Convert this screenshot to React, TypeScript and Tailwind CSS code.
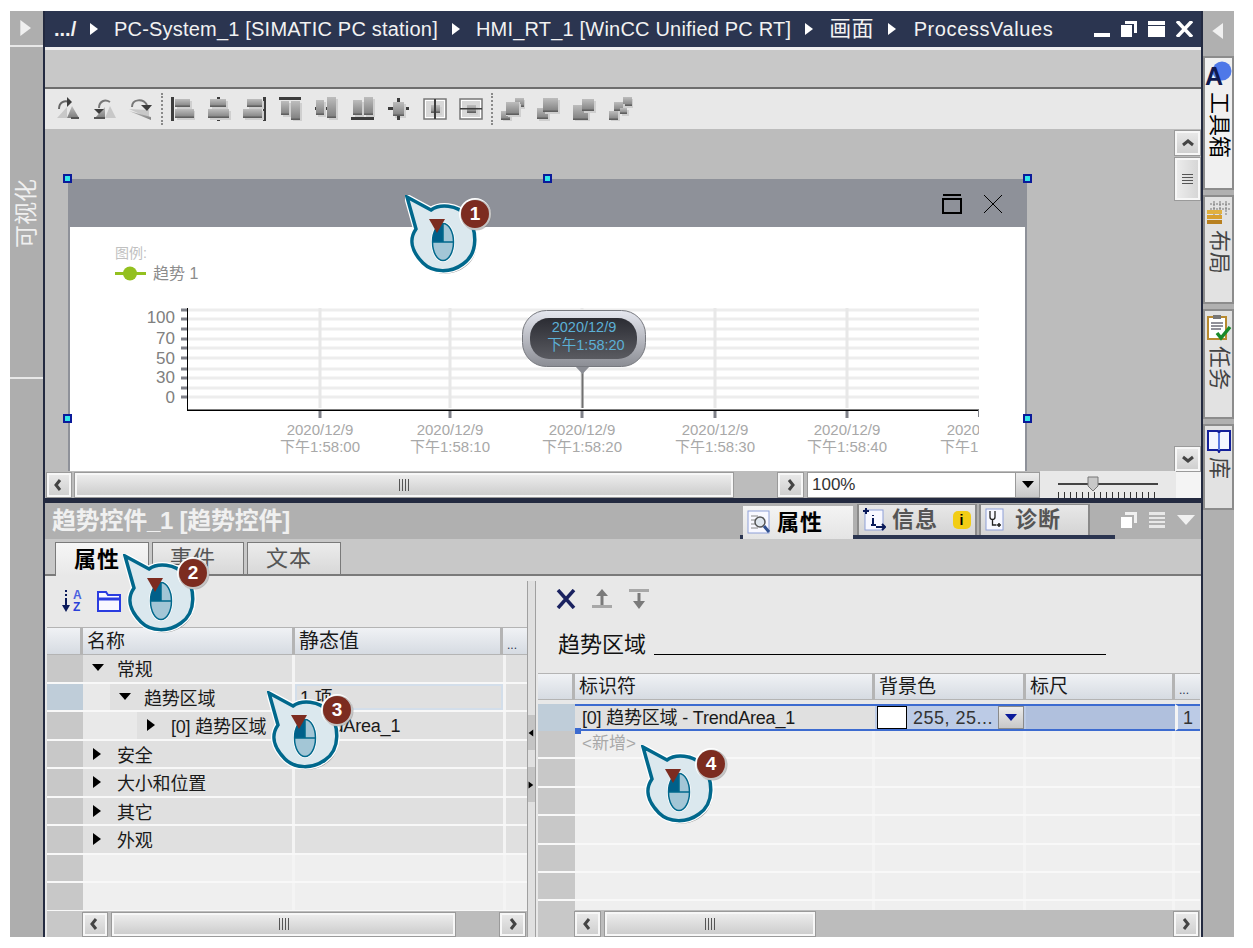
import type { ReactNode } from "react";

const font = "font-['Liberation_Sans','Noto_Sans_CJK_SC',sans-serif]";

// ---------- small bits ----------

function Chevron({ dir }: { dir: "l" | "r" | "u" | "d" }) {
  const pts = {
    l: "9,3 5,8 9,13",
    r: "6,3 10,8 6,13",
    u: "3,10 8,6 13,10",
    d: "3,6 8,10 13,6",
  }[dir];
  return (
    <svg width="16" height="16" viewBox="0 0 16 16">
      <polyline points={pts} fill="none" stroke="#444" strokeWidth="3" />
    </svg>
  );
}

function ScrollBtn({ dir, className = "" }: { dir: "l" | "r" | "u" | "d"; className?: string }) {
  return (
    <div className={`flex shrink-0 items-center justify-center border-2 border-[#f7f7f7] bg-gradient-to-b from-[#e8e8e8] to-[#d0d0d0] outline outline-1 outline-[#9a9a9a] ${className}`}>
      <Chevron dir={dir} />
    </div>
  );
}

function Thumb({ className = "" }: { className?: string }) {
  return (
    <div className={`flex shrink-0 items-center justify-center gap-[2px] border-2 border-[#f7f7f7] bg-gradient-to-b from-[#ececec] to-[#cdcdcd] outline outline-1 outline-[#9a9a9a] ${className}`}>
      <span className="h-3 w-px bg-[#555]" />
      <span className="h-3 w-px bg-[#555]" />
      <span className="h-3 w-px bg-[#555]" />
      <span className="h-3 w-px bg-[#555]" />
    </div>
  );
}

function Tri({ dir, className = "" }: { dir: "r" | "d" | "l"; className?: string }) {
  const pts = { r: "1,0 9,6 1,12", d: "0,2 12,2 6,9", l: "9,0 1,6 9,12" }[dir];
  return (
    <svg width="12" height="12" viewBox="0 0 12 12" className={className} fill="currentColor">
      <polygon points={pts} />
    </svg>
  );
}

function Handle({ className }: { className: string }) {
  return <div className={`absolute size-[9px] border-2 border-[#0a1a9a] bg-[#33e4ea] ${className}`} />;
}

// callout with the mouse pictogram; the tip sits at (left+2, top+2)
function Callout({ n, className }: { n: number; className: string }) {
  const bubble = "M2 2 L26 15 C34 9 52 9 62 21 C72 34 74 58 58 69 C46 78 28 78 18 68 C6 56 4 44 11 34 Z";
  return (
    <div className={`absolute size-[90px] ${className}`}>
      <svg width="90" height="90" viewBox="0 0 90 90" className="absolute left-0 top-0">
        <path d={bubble} fill="#9b9b9b" transform="translate(2 3)" />
        <path d={bubble} fill="#dbe8ee" stroke="#fff" strokeWidth="6" />
        <path d={bubble} fill="#dbe8ee" stroke="#00688c" strokeWidth="3.5" />
        <ellipse cx="38" cy="47" rx="12" ry="20" fill="#fff" />
        <ellipse cx="38" cy="47" rx="10.5" ry="18.5" fill="#a3c6d6" stroke="#00688c" strokeWidth="1.5" />
        <path d="M38 28.5 A10.5 18.5 0 0 0 27.5 47 H38 Z" fill="#00608a" />
        <path d="M38 28 V47 M27 47 H49" stroke="#00688c" strokeWidth="1.5" />
        <polygon points="24,24 40,24 32,38" fill="#7c2c20" />
        <circle cx="70" cy="19" r="16" fill="#fff" />
        <circle cx="71" cy="20" r="15.5" fill="#8a8a8a" opacity="0.5" />
        <circle cx="70" cy="19" r="14" fill="#7c2c20" />
      </svg>
      <span className={`absolute left-[55px] top-[5px] flex h-7 w-[30px] items-center justify-center text-[19px] font-bold text-white ${font}`}>{n}</span>
    </div>
  );
}

// ---------- toolbar icons ----------

function B({ x, y, w, h }: { x: number; y: number; w: number; h: number }) {
  return (
    <>
      <rect x={x + 2} y={y + 2} width={w} height={h} fill="#cfcfcf" />
      <rect x={x} y={y} width={w} height={h} fill="url(#tbg)" />
      <rect x={x} y={y + h - 1.5} width={w} height={1.5} fill="#5f5f5f" />
    </>
  );
}

function Ico({ children }: { children: ReactNode }) {
  return (
    <svg width="24" height="24" viewBox="0 0 24 24" className="shrink-0">
      {children}
    </svg>
  );
}

const D = "#3d3d3d";

const iconsA = [
  <Ico key="a">
    <polygon points="0,21 10,10 10,21" fill="#c8c8c8" />
    <polygon points="10,21 15,9 22,21" fill="url(#tbg)" />
    <rect x="14" y="20" width="8" height="2" fill="#555" />
    <path d="M2 12 C2 5 8 3 12 5" fill="none" stroke="#666" strokeWidth="2" />
    <polygon points="10,0 15,5 10,10" fill={D} />
  </Ico>,
  <Ico key="b">
    <polygon points="12,21 17,9 23,21" fill="#c8c8c8" />
    <polygon points="2,21 12,21 12,10" fill="url(#tbg)" />
    <path d="M6 11 C6 4 12 2 17 5" fill="none" stroke="#777" strokeWidth="2" />
    <polygon points="1,12 11,12 6,17" fill={D} />
    <rect x="1" y="20" width="11" height="2" fill="#555" />
  </Ico>,
  <Ico key="c">
    <polygon points="0,12 20,21 20,13" fill="#c8c8c8" />
    <polygon points="0,14 22,23 22,20" fill="url(#tbg)" />
    <path d="M3 10 C3 2 14 1 18 8" fill="none" stroke="#777" strokeWidth="2" />
    <polygon points="12,8 23,8 18,14" fill={D} />
  </Ico>,
];

const iconsB = [
  <Ico key="1">
    <rect x="0" y="0" width="3" height="24" fill={D} />
    <B x={4} y={2} w={15} h={8} />
    <B x={4} y={12} w={19} h={9} />
  </Ico>,
  <Ico key="2">
    <rect x="10" y="0" width="3" height="24" fill={D} />
    <B x={3} y={2} w={16} h={8} />
    <B x={1} y={12} w={21} h={9} />
  </Ico>,
  <Ico key="3">
    <rect x="20" y="0" width="3" height="24" fill={D} />
    <B x={4} y={2} w={15} h={8} />
    <B x={0} y={12} w={19} h={9} />
  </Ico>,
  <Ico key="4">
    <rect x="0" y="0" width="22" height="3" fill={D} />
    <B x={2} y={4} w={8} h={14} />
    <B x={12} y={4} w={9} h={19} />
  </Ico>,
  <Ico key="5">
    <rect x="0" y="10" width="22" height="3" fill={D} />
    <B x={1} y={3} w={8} h={15} />
    <B x={12} y={0} w={9} h={21} />
  </Ico>,
  <Ico key="6">
    <B x={2} y={3} w={9} h={15} />
    <B x={13} y={0} w={9} h={18} />
    <rect x="0" y="20" width="23" height="3" fill={D} />
  </Ico>,
  <Ico key="7">
    <rect x="10" y="1" width="3" height="22" fill={D} />
    <rect x="1" y="10" width="21" height="3" fill={D} />
    <B x={6} y={5} w={11} h={14} />
    <rect x="10" y="1" width="3" height="4" fill={D} />
    <rect x="10" y="19" width="3" height="4" fill={D} />
  </Ico>,
  <Ico key="8">
    <rect x="1" y="2" width="22" height="20" fill="#fff" stroke="#777" strokeWidth="1.5" />
    <rect x="3" y="4" width="18" height="16" fill="#d8d8d8" />
    <B x={8} y={8} w={9} h={8} />
    <rect x="11" y="2" width="2" height="20" fill={D} />
  </Ico>,
  <Ico key="9">
    <rect x="1" y="2" width="22" height="20" fill="#fff" stroke="#777" strokeWidth="1.5" />
    <rect x="3" y="4" width="18" height="16" fill="#d8d8d8" />
    <B x={8} y={8} w={9} h={8} />
    <rect x="1" y="11" width="22" height="1.5" fill={D} />
  </Ico>,
];

const iconsC = [
  <Ico key="x">
    <B x={14} y={1} w={9} h={9} />
    <B x={0} y={14} w={9} h={9} />
    <rect x="5" y="5" width="14" height="14" fill="#eee" opacity="0.7" />
    <B x={5} y={5} w={13} h={13} />
  </Ico>,
  <Ico key="y">
    <B x={0} y={11} w={11} h={11} />
    <B x={6} y={1} w={15} h={14} />
  </Ico>,
  <Ico key="z">
    <B x={0} y={8} w={15} h={15} />
    <B x={9} y={2} w={12} h={12} />
  </Ico>,
  <Ico key="w">
    <B x={14} y={0} w={9} h={9} />
    <B x={5} y={5} w={9} h={9} />
    <B x={11} y={11} w={7} h={6} />
    <B x={0} y={14} w={9} h={9} />
  </Ico>,
];

function Dots() {
  return <div className="mx-[8px] h-[32px] w-[2px] shrink-0 border-l-2 border-dotted border-[#8a8a8a]" />;
}

// ---------- chart ----------

const gridY = [310, 319, 329, 339, 348, 358, 369, 378, 388, 397];
const gridX = [320, 450, 582, 715, 847];
const yLabels: [string, number][] = [["100", 323], ["70", 344], ["50", 364], ["30", 383], ["0", 403]];
const xLabels: [number, string][] = [[320, "下午1:58:00"], [450, "下午1:58:10"], [582, "下午1:58:20"], [715, "下午1:58:30"], [847, "下午1:58:40"]];

function Chart() {
  const ff = "'Liberation Sans','Noto Sans CJK SC',sans-serif";
  return (
    <svg width="955" height="244" viewBox="70 227 955 244" fontFamily={ff}>
      <defs>
        <linearGradient id="pillOut" x1="0" x2="0" y1="0" y2="1">
          <stop offset="0" stopColor="#e6e8f0" />
          <stop offset="1" stopColor="#8b8d94" />
        </linearGradient>
        <linearGradient id="pillIn" x1="0" x2="0" y1="0" y2="1">
          <stop offset="0" stopColor="#2b2c33" />
          <stop offset="1" stopColor="#5a5b61" />
        </linearGradient>
      </defs>
      <text x="115" y="258" fontSize="14" fill="#c0c0c0">图例:</text>
      <rect x="115" y="272" width="31" height="3" fill="#93c01f" />
      <circle cx="130" cy="273.5" r="7" fill="#93c01f" />
      <text x="153" y="279" fontSize="16" fill="#8c8c8c">趋势 1</text>

      {gridY.map((y) => (
        <g key={y}>
          <rect x="188" y={y - 1.5} width="791" height="3" fill="#ededed" />
          <rect x="181" y={y - 1.5} width="6" height="3" fill="#80828a" />
        </g>
      ))}
      {gridX.map((x) => (
        <g key={x}>
          <rect x={x - 1.5} y="308" width="3" height="100" fill="#e8e8e8" />
          <rect x={x - 1.5} y="411" width="3" height="7" fill="#80828a" />
        </g>
      ))}
      <rect x="187" y="308" width="1" height="102" fill="#000" />
      <rect x="187" y="409.5" width="792" height="1.5" fill="#000" />
      <rect x="978" y="410" width="1" height="7" fill="#80828a" />
      {yLabels.map(([t, y]) => (
        <text key={t} x="175" y={y} fontSize="17" fill="#808080" textAnchor="end">{t}</text>
      ))}
      {xLabels.map(([x, t]) => (
        <g key={x}>
          <text x={x} y="435" fontSize="15" fill="#a8a8a8" textAnchor="middle">2020/12/9</text>
          <text x={x} y="452" fontSize="15" fill="#a8a8a8" textAnchor="middle">{t}</text>
        </g>
      ))}
      <svg x="930" y="420" width="49" height="40" viewBox="930 420 49 40">
        <text x="980" y="435" fontSize="15" fill="#a8a8a8" textAnchor="middle">2020/12/9</text>
        <text x="980" y="452" fontSize="15" fill="#a8a8a8" textAnchor="middle">下午1:58:50</text>
      </svg>

      <rect x="581.5" y="366" width="2" height="42" fill="#707070" />
      <polygon points="575,366 590,366 582.5,374" fill="#8b8d94" />
      <rect x="522.5" y="310.5" width="123" height="56" rx="24" fill="url(#pillOut)" stroke="#77797f" />
      <rect x="530" y="318" width="107" height="41" rx="19" fill="url(#pillIn)" />
      <text x="584" y="332" fontSize="14.5" fill="#5cb0d6" textAnchor="middle">2020/12/9</text>
      <text x="586" y="350" fontSize="14.5" fill="#5cb0d6" textAnchor="middle">下午1:58:20</text>
    </svg>
  );
}

// ---------- tables ----------

type Row = { depth: number; arrow?: "r" | "d"; label?: string; value?: string; sel?: boolean; boxed?: boolean };

const leftRows: Row[] = [
  { depth: 0, arrow: "d", label: "常规" },
  { depth: 1, arrow: "d", label: "趋势区域", value: "1 项", sel: true, boxed: true },
  { depth: 2, arrow: "r", label: "[0] 趋势区域", value: "TrendArea_1" },
  { depth: 0, arrow: "r", label: "安全" },
  { depth: 0, arrow: "r", label: "大小和位置" },
  { depth: 0, arrow: "r", label: "其它" },
  { depth: 0, arrow: "r", label: "外观" },
  { depth: 0 },
  { depth: 0 },
];

function LeftRow({ r }: { r: Row }) {
  const bg = r.label ? "bg-[#e0e0e0]" : "bg-[#efefef]";
  return (
    <div className="grid h-[28.5px] grid-cols-[36px_212px_208px_24px] border-b-2 border-[#f8f8f8] text-[18px] leading-none tracking-[-0.2px] text-[#1a1a1a]">
      <div className={r.sel ? "bg-[#bfcdd9]" : "bg-[#c8c8c8]"} />
      <div className={`flex border-r-[3px] border-[#f4f4f4] ${bg}`}>
        {r.depth > 0 && <div className={r.depth === 1 ? "w-[27px] bg-[#e9e9e9]" : "w-[54px] bg-[#e9e9e9]"} />}
        {r.label && (
          <div className="flex items-center">
            <Tri dir={r.arrow ?? "r"} className="ml-[9px] text-black" />
            <span className="ml-[13px] whitespace-nowrap pt-[4px]">{r.label}</span>
          </div>
        )}
      </div>
      <div className={`flex items-center pl-[3px] pt-[2px] ${bg} ${r.boxed ? "border-2 border-[#d3deea]" : ""}`}>{r.value}</div>
      <div className={`border-l-[3px] border-[#f4f4f4] ${bg}`} />
    </div>
  );
}

function RightRow({ add }: { add?: boolean }) {
  return (
    <div className="grid h-[28.4px] grid-cols-[37px_300px_151px_149px_25px] border-b-2 border-[#f8f8f8] bg-[#efefef]">
      <div className="bg-[#c8c8c8]" />
      <div className="flex items-center border-r-[3px] border-[#f4f4f4] pl-[7px] text-[17px] text-[#a8a8a8]">{add ? "<新增>" : ""}</div>
      <div className="border-r-[3px] border-[#f4f4f4]" />
      <div className="border-r-[3px] border-[#f4f4f4]" />
      <div />
    </div>
  );
}

function HeadCell({ children, className = "border-r-[3px] border-[#b4b4b4] text-[19px]" }: { children?: ReactNode; className?: string }) {
  return (
    <div className={`flex items-center bg-gradient-to-b from-[#f0f2f5] to-[#d6dbe2] pl-[4px] leading-none text-[#1a1a1a] ${className}`}>
      {children}
    </div>
  );
}

function RailTab({ icon, label, h, active }: { icon: ReactNode; label: string; h: string; active?: boolean }) {
  return (
    <div className={`flex w-full flex-col items-center border-2 border-[#8c8c8c] pt-[3px] ${h} ${active ? "bg-[#f0f0f0] text-black" : "bg-[#e2e2e2] text-[#444]"}`}>
      {icon}
      <span className="mt-[4px] text-[22px] leading-none [text-orientation:sideways] [writing-mode:vertical-rl]">{label}</span>
    </div>
  );
}

export default function App() {
  return (
    <div className={`relative h-[948px] w-[1253px] overflow-hidden bg-white pl-[10px] pt-[11px] ${font}`}>
      <svg width="0" height="0" className="absolute">
        <defs>
          <linearGradient id="tbg" x1="0" x2="0" y1="0" y2="1">
            <stop offset="0" stopColor="#bdbdbd" />
            <stop offset="1" stopColor="#7d7d7d" />
          </linearGradient>
        </defs>
      </svg>

      <div className="flex h-[926px] w-[1224px]">
        {/* left rail */}
        <div className="flex w-[35px] shrink-0 flex-col border-r-2 border-[#232a40] bg-[#aeaeae] text-[#f0f0f0]">
          <div className="flex h-[36px] items-center justify-center border-b-2 border-[#e8e8e8]">
            <Tri dir="r" className="size-[16px] text-[#f0f0f0]" />
          </div>
          <div className="flex h-[332px] flex-col items-center justify-end border-b-2 border-[#e8e8e8] pb-[129px]">
            <span className="rotate-180 text-[23px] leading-none [text-orientation:sideways] [writing-mode:vertical-rl]">可视化</span>
          </div>
        </div>

        {/* centre */}
        <div className="flex w-[1158px] shrink-0 flex-col border-r-2 border-[#232a40]">
          <div className="flex h-[36px] shrink-0 items-center gap-[13px] bg-[#2b3550] pl-[9px] text-[20px] leading-none tracking-[0.2px] text-[#f2f2f2]">
            <span className="w-[22px] font-bold tracking-normal">.../</span>
            <Tri dir="r" className="text-white" />
            <span className="whitespace-nowrap">PC-System_1 [SIMATIC PC station]</span>
            <Tri dir="r" className="text-white" />
            <span className="whitespace-nowrap">HMI_RT_1 [WinCC Unified PC RT]</span>
            <Tri dir="r" className="text-white" />
            <span className="whitespace-nowrap text-[22px]">画面</span>
            <Tri dir="r" className="text-white" />
            <span className="ml-[2px] whitespace-nowrap tracking-[0.6px]">ProcessValues</span>
            <div className="ml-auto mr-[8px] flex items-end gap-[11px]">
              <div className="h-[4px] w-[16px] bg-white" />
              <svg width="16" height="16" viewBox="0 0 16 16"><path d="M0 4h11v12H0z M4 0h12v12h-3V3H4z" fill="#fff" /></svg>
              <svg width="17" height="16" viewBox="0 0 17 16"><path d="M0 0h17v4H0z M0 5h17v11H0z" fill="#fff" /></svg>
              <svg width="17" height="16" viewBox="0 0 17 16"><path d="M1 0 L16 16 M16 0 L1 16" stroke="#fff" strokeWidth="3.5" /></svg>
            </div>
          </div>
          <div className="h-[3px] shrink-0 bg-[#efefef]" />
          <div className="h-[37px] shrink-0 border-b-0 bg-[#c8c8c8]" />
          <div className="h-[2px] shrink-0 bg-[#6e6e6e]" />

          {/* editor toolbar */}
          <div className="flex h-[40px] shrink-0 items-center bg-[#e8e8e8] pl-[12px]">
            <div className="flex gap-[12px]">{iconsA}</div>
            <Dots />
            <div className="flex gap-[12px]">{iconsB}</div>
            <Dots />
            <div className="flex gap-[12px]">{iconsC}</div>
          </div>

          {/* canvas */}
          <div className="relative flex h-[342px] shrink-0 bg-[#bcbcbc]">
            <div className="flex-1 overflow-hidden pl-[23px] pt-[50px]">
              <div className="flex h-[292px] w-[959px] flex-col bg-[#8e9199] px-[2px]">
                <div className="flex h-[48px] shrink-0 items-center justify-end gap-[21px] pr-[22px] pt-[2px]">
                  <svg width="20" height="20" viewBox="0 0 20 20"><path d="M1 1h18" stroke="#000" strokeWidth="2" /><rect x="1" y="5" width="18" height="14" fill="none" stroke="#000" strokeWidth="2" /></svg>
                  <svg width="20" height="20" viewBox="0 0 20 20"><path d="M1 1 L19 19 M19 1 L1 19" stroke="#000" strokeWidth="1" /></svg>
                </div>
                <div className="flex-1 overflow-hidden bg-white">
                  <Chart />
                </div>
              </div>
            </div>
            <div className="mr-[1px] flex w-[25px] shrink-0 flex-col pt-[2px]">
              <ScrollBtn dir="u" className="h-[24px]" />
              <div className="mt-[3px] flex h-[42px] flex-col items-center justify-center gap-[2px] border-2 border-[#f7f7f7] bg-gradient-to-r from-[#ececec] to-[#d6d6d6] outline outline-1 outline-[#9a9a9a]">
                <span className="h-px w-[11px] bg-[#555]" />
                <span className="h-px w-[11px] bg-[#555]" />
                <span className="h-px w-[11px] bg-[#555]" />
                <span className="h-px w-[11px] bg-[#555]" />
              </div>
              <ScrollBtn dir="d" className="mt-auto h-[24px]" />
            </div>
            <Handle className="left-[18px] top-[45px]" />
            <Handle className="left-[498px] top-[45px]" />
            <Handle className="left-[978px] top-[45px]" />
            <Handle className="left-[18px] top-[285px]" />
            <Handle className="left-[978px] top-[285px]" />
          </div>

          {/* horizontal bar + zoom */}
          <div className="flex h-[27px] shrink-0 items-center bg-[#bcbcbc] pl-[2px]">
            <ScrollBtn dir="l" className="h-[24px] w-[24px]" />
            <Thumb className="ml-[4px] h-[24px] w-[658px]" />
            <ScrollBtn dir="r" className="ml-[45px] h-[24px] w-[25px]" />
            <div className="ml-[4px] flex h-[26px] w-[233px] items-center justify-between border border-[#9a9a9a] bg-white pl-[4px] text-[17px] text-[#333]">
              100%
              <div className="flex h-full w-[24px] items-center justify-center border-l border-[#9a9a9a] bg-gradient-to-b from-[#ececec] to-[#c8c8c8]">
                <Tri dir="d" className="text-black" />
              </div>
            </div>
            <div className="relative h-full w-[136px] shrink-0 bg-[#e8e8e8]">
              <div className="absolute left-[18px] top-[12px] h-[2px] w-[100px] bg-[#444]" />
              <svg width="12" height="16" viewBox="0 0 12 16" className="absolute left-[47px] top-[5px]">
                <polygon points="1,1 11,1 11,10 6,15 1,10" fill="#c8c8c8" stroke="#777" />
              </svg>
              <div className="absolute left-[18px] top-[21px] h-[6px] w-[100px] bg-[repeating-linear-gradient(90deg,#333_0,#333_1px,transparent_1px,transparent_6px)]" />
            </div>
            <div className="h-full w-[25px] shrink-0 bg-[#f4f4f4]" />
          </div>

          <div className="h-[5px] shrink-0 bg-[#232a40]" />

          {/* inspector title row */}
          <div className="flex h-[36px] shrink-0 items-end bg-[#b0b0b0] pl-[7px]">
            <span className="mb-[6px] w-[236px] whitespace-nowrap text-[24px] font-semibold leading-none tracking-[-0.25px] text-[#f0f0f0]">趋势控件_1 [趋势控件]</span>
            <div className="ml-[452px] h-[4px] w-[3px] bg-[#2b3550]" />
            <div className="flex h-[33px] w-[110px] items-center gap-[4px] bg-gradient-to-b from-[#f4f4f4] to-[#e4e4e4] pl-[4px] text-[22px] font-bold leading-none tracking-[1px] text-black">
              <svg width="26" height="26" viewBox="0 0 26 26">
                <rect x="1" y="1" width="21" height="22" fill="#f8f8ff" stroke="#8ea0d8" />
                <path d="M4 6h7M4 10h5M4 14h5M4 18h7" stroke="#888" />
                <circle cx="13" cy="12" r="5" fill="#dfe6ee" stroke="#555" strokeWidth="1.5" />
                <path d="M17 16 L22 22" stroke="#305090" strokeWidth="3" />
              </svg>
              属性
            </div>
            <div className="flex border-b-4 border-[#2b3550]">
              <div className="ml-[4px] flex h-[31px] w-[120px] items-center gap-[6px] border-x-2 border-t border-[#8a8a8a] bg-gradient-to-b from-[#e8e8e8] to-[#d4d4d4] pl-[3px] text-[22px] font-semibold leading-none tracking-[1px] text-[#555]">
                <svg width="24" height="26" viewBox="0 0 24 26">
                  <rect x="3" y="3" width="18" height="20" fill="#f8f8ff" stroke="#8ea0d8" />
                  <path d="M1 4h6M4 1v6" stroke="#0a1a5a" strokeWidth="2" />
                  <path d="M11 8v1M11 11v7M9 18h5" stroke="#0a1a5a" strokeWidth="2" />
                  <path d="M14 20h9M20 17l3 3-3 3" stroke="#0a1a5a" strokeWidth="2" fill="none" />
                </svg>
                信息
                <span className="ml-[9px] flex size-[18px] items-center justify-center rounded-[5px] bg-[#f2cd16] text-[14px] font-bold leading-none text-black">i</span>
              </div>
              <div className="ml-[2px] flex h-[31px] w-[111px] items-center gap-[10px] border-x-2 border-t border-[#8a8a8a] bg-gradient-to-b from-[#e8e8e8] to-[#d4d4d4] pl-[4px] text-[22px] font-semibold leading-none tracking-[1px] text-[#555]">
                <svg width="20" height="26" viewBox="0 0 20 26">
                  <rect x="1" y="2" width="17" height="21" fill="#f8f8ff" stroke="#8ea0d8" />
                  <path d="M5 4v6a2.5 2.5 0 0 0 5 0V4M7.5 12v6h4" fill="none" stroke="#222" strokeWidth="1.3" />
                  <path d="M12 18h4M14 16v4" stroke="#222" strokeWidth="1.5" />
                </svg>
                诊断
              </div>
              <div className="w-[25px]" />
            </div>
            <div className="ml-[6px] mb-[11px] flex items-center gap-[12px]">
              <svg width="16" height="16" viewBox="0 0 16 16"><path d="M0 5h11v11H0z" fill="#fff" /><path d="M4 0h12v11h-3V3H4z" fill="#f0f0f0" /></svg>
              <svg width="16" height="16" viewBox="0 0 16 16" fill="#e8e8e8"><path d="M0 0h16v3H0zM0 5h16v2H0zM0 9h16v2H0zM0 13h16v3H0z" /></svg>
              <svg width="18" height="12" viewBox="0 0 18 12"><polygon points="0,1 18,1 9,11" fill="#f0f0f0" /></svg>
            </div>
          </div>

          {/* inspector tabs */}
          <div className="flex h-[37px] shrink-0 items-end gap-[3px] border-b-2 border-[#7a7a7a] bg-[#c8c8c8] pl-[10px] text-[22px] leading-none">
            <div className="mb-[-2px] flex h-[34px] w-[94px] items-center justify-center border border-b-0 border-[#7a7a7a] bg-gradient-to-b from-[#f6f6f6] to-[#e8e8e8] pr-[10px] font-bold tracking-[1px] text-black">属性</div>
            <div className="flex h-[32px] w-[92px] items-center justify-center border border-b-0 border-[#7a7a7a] bg-gradient-to-b from-[#ececec] to-[#d8d8d8] pr-[10px] tracking-[1px] text-[#555]">事件</div>
            <div className="flex h-[32px] w-[94px] items-center justify-center border border-b-0 border-[#7a7a7a] bg-gradient-to-b from-[#ececec] to-[#d8d8d8] pr-[10px] tracking-[1px] text-[#555]">文本</div>
          </div>

          {/* inspector body */}
          <div className="flex h-[361px] shrink-0 bg-[#e8e8e8]">
            <div className="flex w-[482px] shrink-0 flex-col pl-[2px]">
              <div className="flex h-[51px] shrink-0 items-center gap-[15px] pb-[2px] pl-[15px]">
                <div className="flex items-center gap-[1px]">
                  <svg width="10" height="24" viewBox="0 0 10 24">
                    <path d="M4 1v2M4 5v2M4 9v8" stroke="#0a1a5a" strokeWidth="2" />
                    <polygon points="0,16 8,16 4,23" fill="#0a1a5a" />
                  </svg>
                  <div className="flex flex-col text-[12px] font-bold leading-[12px]">
                    <span className="text-[#4a62e0]">A</span>
                    <span className="text-[#2840d8]">Z</span>
                  </div>
                </div>
                <svg width="24" height="22" viewBox="0 0 24 22">
                  <path d="M1 2h8l2 3h12v16H1z" fill="#f8f8ff" stroke="#2a3ce0" strokeWidth="2" />
                  <path d="M1 9h22" stroke="#2a3ce0" strokeWidth="3" />
                </svg>
              </div>
              <div className="grid h-[28px] shrink-0 grid-cols-[36px_212px_208px_24px] border-y border-[#b4b4b4]">
                <HeadCell />
                <HeadCell>名称</HeadCell>
                <HeadCell className="border-r-[3px] border-[#b4b4b4] pl-[3px] text-[20px]">静态值</HeadCell>
                <HeadCell className="items-end pb-[3px] text-[12px] text-[#2b3550]">...</HeadCell>
              </div>
              <div className="h-[256px] shrink-0 overflow-hidden">
                {leftRows.map((r, i) => (
                  <LeftRow key={i} r={r} />
                ))}
              </div>
              <div className="flex h-[26px] shrink-0 items-center">
                <div className="h-full w-[36px] bg-[#c8c8c8]" />
                <div className="flex h-full flex-1 items-center bg-[#bcbcbc]">
                  <ScrollBtn dir="l" className="h-[23px] w-[24px]" />
                  <Thumb className="ml-[5px] h-[23px] w-[343px]" />
                  <ScrollBtn dir="r" className="ml-auto mr-[2px] h-[23px] w-[25px]" />
                </div>
              </div>
            </div>

            {/* splitter */}
            <div className="flex w-[11px] shrink-0 flex-col pt-[5px]">
              <div className="flex h-[356px] w-[9px] flex-col border-x border-[#a0a0a0] bg-[#e0e0e0] pt-[134px]">
                <div className="flex h-[35px] items-center justify-center bg-[#c4c4c4]"><Tri dir="l" className="size-[8px] text-black" /></div>
                <div className="h-[17px]" />
                <div className="flex h-[35px] items-center justify-center bg-[#c4c4c4]"><Tri dir="r" className="size-[8px] text-black" /></div>
              </div>
            </div>

            {/* right pane */}
            <div className="flex w-[662px] shrink-0 flex-col">
              <div className="flex h-[50px] shrink-0 items-center gap-[15px] pb-[4px] pl-[18px]">
                <svg width="20" height="20" viewBox="0 0 20 20"><path d="M2 1 L18 19 M18 1 L2 19" stroke="#1a2260" strokeWidth="3.5" /></svg>
                <svg width="22" height="20" viewBox="0 0 22 20"><path d="M11 16V5" stroke="#7a7a7a" strokeWidth="3" /><polygon points="5,7 17,7 11,0" fill="#7a7a7a" /><rect x="1" y="16" width="20" height="3" fill="#a8a8a8" /></svg>
                <svg width="22" height="20" viewBox="0 0 22 20"><rect x="1" y="0" width="20" height="3" fill="#a8a8a8" /><path d="M11 4v10" stroke="#7a7a7a" strokeWidth="3" /><polygon points="5,12 17,12 11,20" fill="#7a7a7a" /></svg>
              </div>
              <div className="flex h-[30px] shrink-0 items-end pl-[20px] text-[22px] leading-none text-[#111]">
                <span className="whitespace-nowrap">趋势区域</span>
                <div className="mb-[1px] ml-[8px] h-px w-[452px] bg-black" />
              </div>
              <div className="h-[17px] shrink-0" />
              <div className="grid h-[27px] shrink-0 grid-cols-[37px_300px_151px_149px_25px] border-y border-[#b4b4b4]">
                <HeadCell />
                <HeadCell>标识符</HeadCell>
                <HeadCell>背景色</HeadCell>
                <HeadCell>标尺</HeadCell>
                <HeadCell className="items-end pb-[3px] text-[12px] text-[#2b3550]">...</HeadCell>
              </div>
              <div className="h-[4px] shrink-0 bg-[#e8e8e8]" />
              <div className="relative grid h-[27px] shrink-0 grid-cols-[37px_300px_151px_149px_25px]">
                <div className="bg-[#bfcdd9]" />
                <div className="flex items-center whitespace-nowrap border-y-2 border-[#3c6bd0] bg-[#e0e0e0] pl-[7px] text-[18px] leading-none tracking-[-0.2px] text-[#1a1a1a]">[0] 趋势区域 - TrendArea_1</div>
                <div className="flex items-center border-y-2 border-[#3c6bd0] bg-[#bccbe6] pl-[2px] text-[18px] leading-none text-[#333]">
                  <div className="h-full w-[30px] border border-black bg-white" />
                  <span className="ml-[6px] whitespace-nowrap tracking-[0.5px]">255, 25...</span>
                  <div className="ml-auto mr-[2px] flex h-full w-[26px] items-center justify-center border border-[#8a8a8a] bg-gradient-to-b from-[#ececec] to-[#c8c8c8]">
                    <Tri dir="d" className="text-[#0a1a9a]" />
                  </div>
                </div>
                <div className="border-y-2 border-[#3c6bd0] bg-[#b0c0dd]" />
                <div className="flex items-center border-y-2 border-l-[3px] border-[#3c6bd0] border-l-[#f4f4f4] bg-[#bccbe6] pl-[5px] text-[18px] leading-none text-[#333]">1</div>
                <div className="absolute bottom-[-3px] left-[37px] size-[6px] bg-[#3c6bd0]" />
              </div>
              <div className="h-[179px] shrink-0 overflow-hidden">
                <RightRow add />
                <RightRow />
                <RightRow />
                <RightRow />
                <RightRow />
                <RightRow />
                <RightRow />
              </div>
              <div className="flex h-[27px] shrink-0 items-center">
                <div className="h-full w-[37px] bg-[#c8c8c8]" />
                <div className="flex h-full flex-1 items-center bg-[#bcbcbc]">
                  <ScrollBtn dir="l" className="h-[24px] w-[25px]" />
                  <Thumb className="ml-[5px] h-[24px] w-[210px]" />
                  <ScrollBtn dir="r" className="ml-auto mr-[2px] h-[24px] w-[24px]" />
                </div>
              </div>
            </div>
          </div>
        </div>

        {/* right rail */}
        <div className="flex w-[31px] shrink-0 flex-col gap-[5px] bg-[#b0b0b0]">
          <div className="flex h-[40px] shrink-0 items-center justify-center">
            <Tri dir="l" className="size-[16px] text-[#f0f0f0]" />
          </div>
          <RailTab
            active
            h="h-[134px]"
            label="工具箱"
            icon={
              <div className="relative h-[27px] w-[27px] shrink-0">
                <svg width="27" height="27" viewBox="0 0 27 27">
                  <circle cx="17" cy="10" r="9.5" fill="#4f78e8" />
                </svg>
                <span className="absolute left-0 top-[4px] text-[25px] font-bold leading-[23px] text-[#101a50]">A</span>
              </div>
            }
          />
          <RailTab
            h="h-[109px]"
            label="布局"
            icon={
              <svg width="26" height="26" viewBox="0 0 26 26" className="shrink-0">
                <path d="M8 1v14M14 1v14M20 1v14M4 4h20M4 9h20" stroke="#777" strokeDasharray="2 1" />
                <rect x="1" y="10" width="15" height="4" fill="#e0b040" />
                <rect x="1" y="15" width="15" height="4" fill="#d8a030" />
                <rect x="1" y="20" width="15" height="4" fill="#b88020" />
              </svg>
            }
          />
          <RailTab
            h="h-[110px]"
            label="任务"
            icon={
              <svg width="26" height="28" viewBox="0 0 26 28" className="shrink-0">
                <rect x="2" y="3" width="18" height="22" fill="#fff" stroke="#b88a30" strokeWidth="2" />
                <rect x="7" y="1" width="8" height="4" fill="#777" />
                <path d="M5 9h12M5 12h12M5 15h10" stroke="#223" />
                <path d="M11 19 L15 24 L24 13" fill="none" stroke="#1a8a2a" strokeWidth="3.5" />
              </svg>
            }
          />
          <RailTab
            h="h-[86px]"
            label="库"
            icon={
              <svg width="26" height="24" viewBox="0 0 26 24" className="shrink-0">
                <path d="M2 2h10l1 2 1-2h10v19H14l-1 2-1-2H2z" fill="#f4f6ff" stroke="#14209a" strokeWidth="2" />
                <path d="M13 4v17" stroke="#5a78e0" strokeWidth="2" />
              </svg>
            }
          />
        </div>
      </div>

      <Callout n={1} className="left-[405px] top-[195px]" />
      <Callout n={2} className="left-[123px] top-[554px]" />
      <Callout n={3} className="left-[267px] top-[691px]" />
      <Callout n={4} className="left-[641px] top-[745px]" />
    </div>
  );
}
